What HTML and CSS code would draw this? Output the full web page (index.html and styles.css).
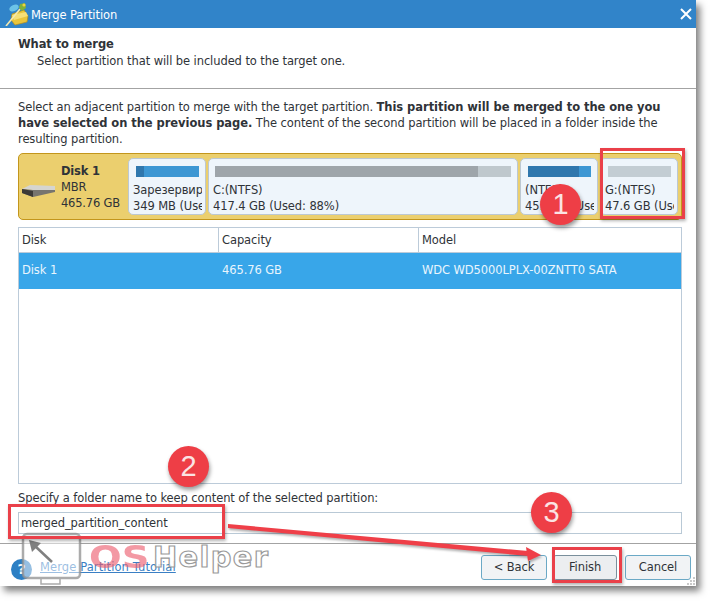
FILE: index.html
```html
<!DOCTYPE html>
<html lang="en">
<head>
<meta charset="utf-8">
<title>Merge Partition</title>
<link rel="stylesheet" href="styles.css">
</head>
<body>
<div class="window">
  <header class="titlebar">
    <svg class="app-icon" viewBox="0 0 24 24" width="24" height="24">
      <path d="M7 12 L19 8 L23 14 L22 20 L10 23 L6 18 Z" fill="#e9c53c" stroke="#b88f1a" stroke-width=".7"/>
      <path d="M7 13 L21 10 L23 14 L9 18 Z" fill="#f6df77"/>
      <path d="M1 24 L15 7" stroke="#f4e9b0" stroke-width="1.6"/>
      <ellipse cx="9" cy="6" rx="5" ry="3" fill="#6cc3e8" transform="rotate(-25 9 6)"/>
      <path d="M15 2 L20 1 L21 6 L17 9 L14 6 Z" fill="#7fb23a"/>
      <circle cx="19" cy="3" r="1.6" fill="#f2d13c"/>
    </svg>
    <span class="title">Merge Partition</span>
    <svg class="close" viewBox="0 0 12 12" width="12" height="12"><path d="M1 1 L11 11 M11 1 L1 11" stroke="#fff" stroke-width="2"/></svg>
  </header>
  <section class="heading">
    <h1>What to merge</h1>
    <p>Select partition that will be included to the target one.</p>
  </section>
  <main class="content">
    <p class="intro">Select an adjacent partition to merge with the target partition. <b>This partition will be merged to the one you have selected on the previous page.</b> The content of the second partition will be placed in a folder inside the resulting partition.</p>
    <div class="diskbar">
      <div class="diskinfo">
        <svg class="hdd" viewBox="0 0 33 12" width="33" height="12">
          <path d="M0 4 L8 0 L33 1 L33 5 L11 5 Z" fill="#d5d5d0"/>
          <path d="M0 4 L11 5 L33 5 L33 7 L11 12 L0 8 Z" fill="#77756f"/>
          <path d="M0 4 L11 6 L11 12 L0 8 Z" fill="#3c3a36"/>
        </svg>
        <div class="disktext"><b>Disk 1</b><span>MBR</span><span>465.76 GB</span></div>
      </div>
      <div class="part p1"><div class="bar blue"><i class="fill f1"></i></div><span>Зарезервир</span><span>349 MB (Used: 7%)</span></div>
      <div class="part p2"><div class="bar grey"><i class="fill f2"></i></div><span>C:(NTFS)</span><span>417.4 GB (Used: 88%)</span></div>
      <div class="part p3"><div class="bar blue"><i class="fill f3"></i></div><span>(NTFS)</span><span>451 MB (Used: 81%)</span></div>
      <div class="part p4"><div class="bar light"></div><span>G:(NTFS)</span><span>47.6 GB (Used: 0%)</span></div>
    </div>
    <div class="table">
      <div class="row head"><div>Disk</div><div>Capacity</div><div>Model</div></div>
      <div class="row selected"><div>Disk 1</div><div>465.76 GB</div><div>WDC WD5000LPLX-00ZNTT0 SATA</div></div>
    </div>
    <label class="folder-label" for="folder">Specify a folder name to keep content of the selected partition:</label>
    <input class="folder" id="folder" type="text" value="merged_partition_content">
  </main>
  <footer class="footer">
    <span class="help">?</span>
    <a class="tutorial" href="#">Merge Partition Tutorial</a>
    <div class="buttons">
      <button class="btn">&lt; Back</button>
      <button class="btn finish">Finish</button>
      <button class="btn">Cancel</button>
    </div>
  </footer>
  <svg class="grip" viewBox="0 0 8 8" width="8" height="8"><path d="M6 0h2v2H6zM3 3h2v2H3zM6 3h2v2H6zM0 6h2v2H0zM3 6h2v2H3zM6 6h2v2H6z" fill="#c9c9c9"/></svg>
</div>

<div class="watermark">
  <svg class="wm-monitor" viewBox="0 0 62 54" width="62" height="54">
    <rect x="2" y="2" width="57" height="44" rx="4" fill="#fff" fill-opacity=".5" stroke="#8f8f8f" stroke-opacity=".75" stroke-width="2.5"/>
    <path d="M20 47 V52 H39 V47" fill="none" stroke="#aaa" stroke-width="1.5"/>
    <path d="M31 30 L14 14" stroke="#808080" stroke-width="2.5" fill="none"/>
    <path d="M8 8 L20 11 L11 20 Z" fill="#808080"/>
  </svg>
  <span class="wm-os">OS</span>
  <span class="wm-helper">Helper</span>
</div>

<svg class="arrow" viewBox="0 0 330 50" width="330" height="50">
  <path d="M1 3 L301 30 L301 35 L1 7 Z" fill="#ef3f48"/>
  <path d="M299 26 L314 34 L301 40 Z" fill="#ef3f48"/>
</svg>
<div class="mark box1"></div>
<div class="mark box2"></div>
<div class="mark box3"></div>
<div class="step step1">1</div>
<div class="step step2">2</div>
<div class="step step3">3</div>
</body>
</html>
```
FILE: styles.css
```css
* { box-sizing: border-box; }
html, body { margin: 0; padding: 0; }
body {
  width: 716px;
  height: 606px;
  position: relative;
  overflow: hidden;
  background: #fff;
  font-family: "DejaVu Sans", sans-serif;
  font-size: 11.5px;
  letter-spacing: -0.09px;
  color: #2f3338;
}
.window {
  width: 696px;
  height: 586px;
  position: relative;
  display: flex;
  flex-direction: column;
  background: #fff;
  box-shadow: 4px 5px 7px rgba(0,0,0,.5);
}
.titlebar {
  height: 28px;
  flex: none;
  background: #3184c9;
  display: flex;
  align-items: center;
  padding: 0 4px 0 5px;
  color: #fff;
}
.app-icon { margin-right: 2px; flex: none; }
.title { font-size: 11.5px; flex: 1; padding-top: 2px; }
.close { flex: none; }
.heading {
  height: 61px;
  flex: none;
  padding: 8px 18px 0;
  border-bottom: 1px solid #a3a3a3;
}
.heading h1 { margin: 0; font-size: 11.5px; line-height: 17px; font-weight: bold; letter-spacing: -.1px; }
.heading p { margin: 0; padding-left: 19px; line-height: 17px; }
.content { flex: 1; padding: 10px 15px 0 18px; display: flex; flex-direction: column; }
.intro { margin: 0; line-height: 16px; height: 54px; width: 650px; }
.intro b { letter-spacing: -.05px; }
.diskbar {
  height: 67px;
  width: 664px;
  flex: none;
  display: flex;
  padding: 4px 2px 4px 0;
  background: #ebcf6e;
  border: 1px solid #c3961c;
  border-radius: 5px;
}
.diskinfo { width: 109px; flex: none; display: flex; align-items: center; padding-left: 3px; }
.hdd { flex: none; margin-top: 8px; margin-right: 6px; }
.disktext { display: flex; flex-direction: column; line-height: 16px; white-space: nowrap; letter-spacing: -.2px; }
.disktext b { font-weight: bold; }
.part {
  flex: none;
  display: flex;
  flex-direction: column;
  overflow: hidden;
  white-space: nowrap;
  padding: 7px 3px 0 4px;
  line-height: 16px;
  background: #eef5fb;
  border: 1px solid #bcc8d2;
  border-radius: 5px;
}
.part span { overflow: hidden; }
.p1 { width: 78px; margin-right: 2px; }
.p2 { width: 310px; margin-right: 2px; }
.p3 { width: 78px; margin-right: 2px; }
.p4 { width: 78px; }
.bar { height: 11px; margin: 0 3px 5px; flex: none; }
.p2 .bar { margin-left: 2px; }
.blue { background: #3d97d3; }
.grey { background: #bfc8cd; }
.light { background: #c3cdd3; }
.fill { display: block; height: 100%; }
.f1 { width: 13%; background: #2f77ad; }
.f2 { width: 89%; background: #9ea5aa; }
.f3 { width: 81%; background: #2f77ad; }
.table {
  margin-top: 7px;
  width: 664px;
  height: 257px;
  flex: none;
  border: 1px solid #bccbd9;
}
.row { display: grid; grid-template-columns: 200px 200px 1fr; align-items: center; }
.row > div { padding-left: 3px; white-space: nowrap; }
.head { height: 25px; border-bottom: 1px solid #bccbd9; }
.head > div { height: 100%; display: flex; align-items: center; border-right: 1px solid #bccbd9; }
.head > div:last-child { border-right: 0; }
.selected { height: 36px; padding-bottom: 2px; background: #38a6e9; color: #e9f5fd; }
.folder-label { margin-top: 6px; line-height: 16px; height: 22px; }
.folder {
  width: 664px;
  height: 22px;
  flex: none;
  border: 1px solid #b9c9d6;
  padding: 0 2px;
  font: inherit;
  letter-spacing: inherit;
  color: #2f3338;
  background: #fff;
  outline: 0;
}
.footer {
  height: 44px;
  flex: none;
  display: flex;
  align-items: center;
  padding: 0 5px 0 11px;
  border-top: 1px solid #a3a3a3;
  margin-top: 9px;
}
.help {
  width: 21px;
  height: 21px;
  flex: none;
  margin-top: 7px;
  border-radius: 50%;
  background: #2c7fc4;
  color: #fff;
  font-weight: bold;
  font-size: 14px;
  line-height: 21px;
  text-align: center;
}
.tutorial { margin-left: 8px; margin-top: 3px; color: #3a7fc4; text-decoration: underline; letter-spacing: .1px; flex: 1; white-space: nowrap; }
.buttons { display: flex; gap: 7px; margin-top: 3px; }
.btn {
  width: 66px;
  height: 25px;
  padding: 0;
  font: inherit;
  letter-spacing: inherit;
  color: #2f3338;
  background: #f1f3f5;
  border: 1px solid #6ba9c6;
  border-radius: 3px;
}
.finish { background: #eceef0; border-color: #7a8f9c; margin-left: -1px; margin-right: 1px; width: 64px; }
.grip { position: absolute; right: 1px; bottom: 1px; }

.watermark { position: absolute; left: 21px; top: 532px; width: 255px; height: 54px; }
.wm-monitor { position: absolute; left: 0; top: 0; }
.wm-os {
  position: absolute; left: 68px; top: 3px;
  font-family: "DejaVu Sans", sans-serif; font-weight: bold; font-size: 32px; line-height: 44px;
  letter-spacing: 0;
  color: rgba(236,90,108,.62);
  transform: scaleX(1.2);
  transform-origin: left center;
}
.wm-helper {
  position: absolute; left: 132px; top: 3px;
  font-family: "DejaVu Sans", sans-serif; font-weight: bold; font-size: 29px; line-height: 44px;
  letter-spacing: 1.3px;
  color: rgba(255,255,255,.8);
  -webkit-text-stroke: 1.2px #9a9a9a;
}
.arrow { position: absolute; left: 227px; top: 521px; filter: drop-shadow(1px 2px 1px rgba(0,0,0,.3)); }
.mark { position: absolute; border: 3px solid #ea4049; box-shadow: 1px 2px 3px rgba(0,0,0,.3); }
.box1 { left: 600px; top: 148px; width: 85px; height: 71px; }
.box2 { left: 8px; top: 504px; width: 217px; height: 35px; }
.box3 { left: 552px; top: 547px; width: 70px; height: 36px; }
.step {
  position: absolute;
  width: 41px;
  height: 41px;
  border-radius: 50%;
  background: #ee3e46;
  color: #fbe3e3;
  font-family: "Liberation Sans", sans-serif;
  font-size: 29px;
  letter-spacing: 0;
  line-height: 41px;
  text-align: center;
  box-shadow: 1px 3px 4px rgba(0,0,0,.4);
}
.step1 { left: 540px; top: 184px; }
.step2 { left: 168px; top: 446px; }
.step3 { left: 531px; top: 492px; }
```
